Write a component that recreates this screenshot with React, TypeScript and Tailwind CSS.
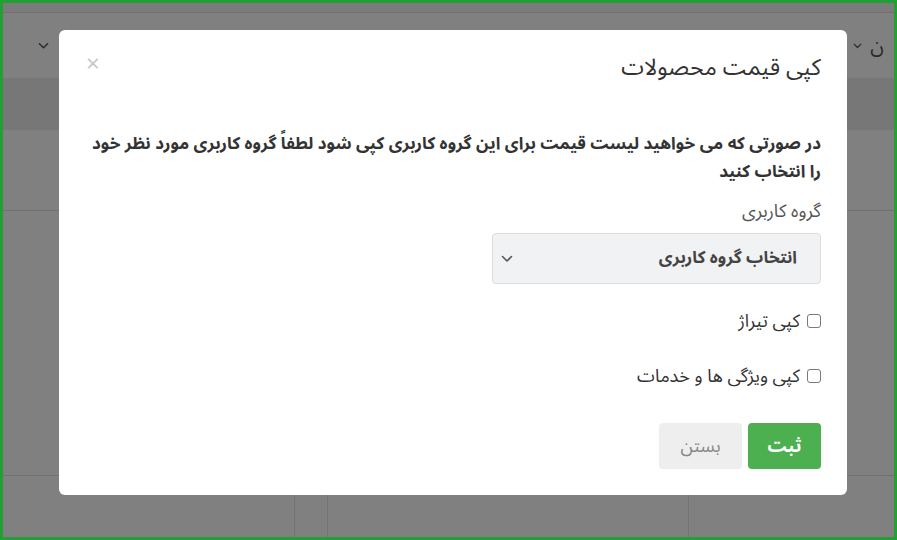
import React from "react";

const FONT = '"Noto Sans Arabic", "DejaVu Sans", sans-serif';

function Chevron({ className }: { className?: string }) {
  return (
    <svg viewBox="0 0 12 8" className={className} fill="none" stroke="currentColor" strokeWidth="1.6" strokeLinecap="round" strokeLinejoin="round">
      <path d="M1.5 1.5 L6 6 L10.5 1.5" />
    </svg>
  );
}

function Check({ label }: { label: string }) {
  return (
    <label className="flex items-center gap-[7px] h-[26px] text-[18px] text-[#333]">
      <span className="w-[14px] h-[14px] border border-[#7a7a7a] rounded-[3px] bg-white shrink-0" />
      <span className="leading-[26px]">{label}</span>
    </label>
  );
}

export default function App() {
  return (
    <div className="relative w-[897px] h-[540px] border-[3px] border-[#22a033] bg-[#808080] overflow-hidden" style={{ fontFamily: FONT }}>
      {/* dimmed page behind */}
      <div className="flex flex-col h-full">
        <div className="h-[10px] bg-[#7b7b7b] border-b border-[#707070]" />
        <div className="h-[65px] flex items-center justify-between pl-[35px] pr-[10px] bg-[#808080]">
          <Chevron className="w-[11px] h-[8px] text-[#2b2b2b]" />
          <div className="flex items-center gap-[8px]">
            <Chevron className="w-[9px] h-[6px] text-[#2b2b2b]" />
            <span className="text-[20px] text-[#2b2b2b] leading-none">ن</span>
          </div>
        </div>
        <div className="h-[52px] bg-[#777777]" />
        <div className="h-[80px]" />
        <div className="h-[265px] border-t border-[#707070]" />
        <div className="flex-1 border-t border-[#707070] flex">
          <div className="w-[292px] border-r border-[#747474]" />
          <div className="w-[33px] border-r border-[#747474]" />
          <div className="w-[361px] border-r border-[#747474]" />
        </div>
      </div>

      {/* modal */}
      <div dir="rtl" className="absolute left-[56px] top-[27px] w-[788px] h-[465px] bg-white rounded-[6px] px-[26px] pt-[22px] pb-[26px] flex flex-col">
        <div className="flex items-start justify-between">
          <h2 className="text-[23px] leading-[32px] text-[#333] font-normal">کپی قیمت محصولات</h2>
          <span className="text-[#c8c8c8] text-[24px] leading-[20px] mt-[3px] ml-[1px]">×</span>
        </div>
        <p className="mt-[46px] text-[17px] leading-[28px] font-bold text-[#333] whitespace-nowrap">
          در صورتی که می خواهید لیست قیمت برای این گروه کاربری کپی شود لطفاً گروه کاربری مورد نظر خود
          <br />
          را انتخاب کنید
        </p>
        <div className="mt-[12px] text-[18px] leading-[26px] text-[#555]">گروه کاربری</div>
        <div className="mt-[9px] w-[329px] h-[51px] bg-[#f1f2f4] border border-[#dddddd] rounded-[4px] flex items-center justify-between pr-[23px] pl-[8px]">
          <span className="text-[17px] font-bold text-[#444]">انتخاب گروه کاربری</span>
          <Chevron className="w-[12px] h-[8px] text-[#555]" />
        </div>
        <div className="mt-[24px]">
          <Check label="کپی تیراژ" />
        </div>
        <div className="mt-[29px]">
          <Check label="کپی ویژگی ها و خدمات" />
        </div>
        <div className="mt-[34px] flex gap-[6px]">
          <button className="w-[73px] h-[46px] bg-[#4caf50] text-white text-[18px] font-bold rounded-[4px]">ثبت</button>
          <button className="w-[83px] h-[46px] bg-[#eeeeee] text-[#888] text-[18px] rounded-[4px]">بستن</button>
        </div>
      </div>
    </div>
  );
}
